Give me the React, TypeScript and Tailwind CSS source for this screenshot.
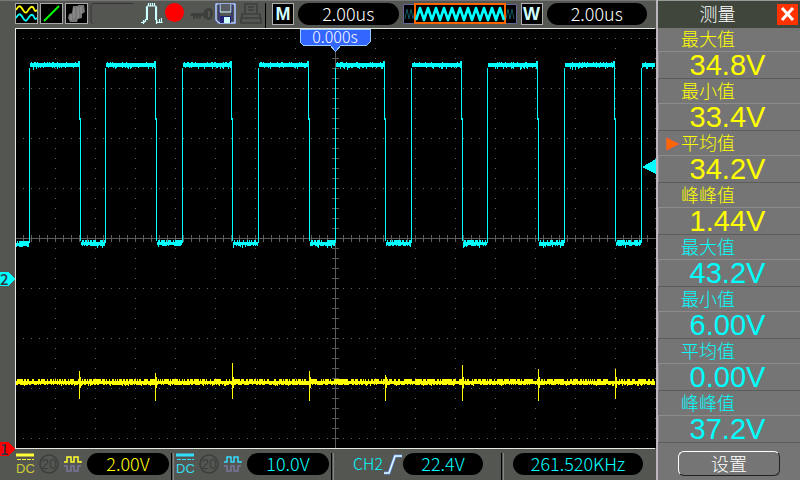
import type { ReactNode } from 'react';
import { clsx } from 'clsx';

interface Measurement {
  id: string;
  label: string;
  value: string;
  channel: 1 | 2;
  selected?: boolean;
}

const measurements: Measurement[] = [
  { id: 'ch1-max', label: '最大值', value: '34.8V', channel: 1 },
  { id: 'ch1-min', label: '最小值', value: '33.4V', channel: 1 },
  { id: 'ch1-avg', label: '平均值', value: '34.2V', channel: 1, selected: true },
  { id: 'ch1-pp', label: '峰峰值', value: '1.44V', channel: 1 },
  { id: 'ch2-max', label: '最大值', value: '43.2V', channel: 2 },
  { id: 'ch2-min', label: '最小值', value: '6.00V', channel: 2 },
  { id: 'ch2-avg', label: '平均值', value: '0.00V', channel: 2 },
  { id: 'ch2-pp', label: '峰峰值', value: '37.2V', channel: 2 },
];

const RISING = [29, 105, 182, 258, 335, 411, 487, 564, 641];
const FALLING = [80, 156, 232, 309, 385, 462, 538, 615];

// [x, top, bottom] of every glitch on channel 1
const SPIKES = [
  [79, 371, 399],
  [155, 373, 401],
  [232, 363, 399],
  [309, 371, 401],
  [385, 375, 401],
  [462, 365, 401],
  [538, 369, 401],
  [615, 369, 399],
];

function createNoise(seed: number) {
  let s = seed;
  return () => {
    s = (s * 1664525 + 1013904223) % 4294967296;
    return s / 4294967296;
  };
}

// One vertical bar per column: a solid core with a ragged edge on both sides
function noisyLine(from: number, to: number, y: number, seed: number, spread: number, rough = 0.4) {
  const noise = createNoise(seed);
  let d = '';
  for (let x = from; x < to; x++) {
    const up = noise() > rough ? 2 : 0;
    const down = noise() > rough ? 1 : 0;
    const extra = noise() > 0.88 ? spread : 0;
    d += `M${x} ${y - 1 - up}h1V${y + 2 + down + extra}h-1z`;
  }
  return d;
}

// The plateaus are flatter than the troughs, with an overshoot before each falling edge
function channelTwoPath() {
  let d = noisyLine(16, 29, 244, 7, 1);
  RISING.forEach((x, i) => {
    const end = FALLING[i] ?? 655;
    d += `M${x + 1} 63H${end}V67H${x + 1}z`;
    d += noisyLine(x + 1, end, 65, 31 + i, 2, 0.8);
    d += `M${x} 68h1V243h-1z`;
    if (FALLING[i]) {
      d += `M${end - 2} 61h2V67h-2zM${end - 1} 61h1V120h-1zM${end} 118h1V241h-1z`;
      d += noisyLine(end + 1, RISING[i + 1] ?? 655, 243, 77 + i, 2);
    }
  });
  return d;
}

function channelOnePath() {
  let d = noisyLine(16, 655, 382, 5, 1);
  SPIKES.forEach(([x, top, bottom]) => {
    d += `M${x} ${top}h1V${bottom}h-1zM${x + 1} 377h1V388h-1z`;
  });
  return d;
}

function gridDots() {
  let d = '';
  for (let y = 38; y < 448; y += 50) {
    if (y === 238) continue;
    for (let x = 23; x < 655; x += 8) d += `M${x} ${y}h1v1h-1z`;
  }
  for (let x = 55; x < 656; x += 40) {
    if (x === 335) continue;
    for (let y = 38; y < 448; y += 10) d += `M${x} ${y}h1v1h-1z`;
  }
  return d;
}

function axisTicks() {
  let d = 'M16 238h639v1H16zM335 46h1V448h-1z';
  for (let x = 23; x < 655; x += 8) d += `M${x} 235h1v7h-1z`;
  for (let y = 58; y < 448; y += 10) d += `M332 ${y}h7v1h-7z`;
  return d;
}

function zigzag(from: number, to: number, step: number, top: number, bottom: number) {
  let d = `M${from} ${bottom}`;
  for (let x = from + step, i = 0; x <= to; x += step, i++) d += `L${x} ${i % 2 ? bottom : top}`;
  return d;
}

function IconBox({ label, children }: { label: string; children: ReactNode }) {
  return (
    <button type="button" aria-label={label} className="h-[21px] w-[23px] shrink-0 border border-[#a8a8a8] bg-black">
      <svg viewBox="0 0 21 19" className="block h-full w-full">{children}</svg>
    </button>
  );
}

function Letter({ children }: { children: string }) {
  return (
    <span className="flex h-[22px] w-[22px] shrink-0 items-center justify-center border border-[#b0b0b0] bg-black font-['Liberation_Sans',sans-serif] text-lg leading-none font-bold text-[#d0ffff]">
      {children}
    </span>
  );
}

function Readout({ className, children }: { className?: string; children: string }) {
  return (
    <span className={clsx('flex h-[22px] items-center justify-center rounded-full bg-black pb-0.5 text-lg leading-none', className)}>
      {children}
    </span>
  );
}

function Divider() {
  return <span className="h-7 w-[3px] shrink-0 border-r border-l border-r-[#858585] border-l-black" />;
}

function CouplingIcon({ color, line }: { color: string; line: string }) {
  return (
    <svg viewBox="0 0 70 22" className="h-[22px] w-[70px] shrink-0 font-['Liberation_Sans',sans-serif] font-normal">
      <path d="M0 2h18" stroke={line} strokeWidth="3" />
      <path d="M1 6.5h17" stroke={line} strokeDasharray="4 1" />
      <text x="0" y="20" fontSize="13" fill={color}>DC</text>
      <circle cx="33" cy="11" r="9" fill="none" stroke="#3d3f3c" strokeWidth="1.5" />
      <text x="33" y="16" fontSize="14" textAnchor="middle" fill="#3d3f3c">20</text>
      <path d="M48 9h3V4h4v5h3V4h4v5h3V8" fill="none" stroke={line} strokeWidth="1.5" />
      <path d="M48 13h3v5h4v-5h3v5h4v-5h3" fill="none" stroke="#77779c" strokeWidth="1.5" />
    </svg>
  );
}

function Toolbar() {
  return (
    <header className="flex h-7 items-start border-t border-[#777] bg-[#545652] pt-0.5 pr-[9px] pl-[15px]">
      <div className="flex shrink-0 gap-0.5">
        <IconBox label="Channels">
          <path d="M0 6c3-5 4-5 7 0s4 2 6-1 4-3 5 0 2 2 3 1" fill="none" stroke="#ffff00" strokeWidth="1.8" />
          <path d="M0 14c3-5 4-5 7 0s4 2 6-1 4-3 5 0 2 2 3 1" fill="none" stroke="#00ffff" strokeWidth="1.8" />
        </IconBox>
        <IconBox label="Vectors">
          <path d="M3 17 18 2" stroke="#00ff00" strokeWidth="2" />
        </IconBox>
        <IconBox label="Persistence">
          <path d="M7 2h4l2-1h5l1 7-3 2v4l-4 1-1 3H4l-2-4 1-4 3-1z" fill="#777" />
          <path d="M8 4v10M12 3v11M15 3v6M5 11v5" stroke="#999" />
        </IconBox>
      </div>
      <svg viewBox="0 0 44 22" className="ml-0.5 h-[22px] w-11 shrink-0" fill="none">
        <path d="M43 .5H3L1 2v17l2 2" stroke="#3a323c" />
      </svg>
      <svg viewBox="0 0 22 22" className="ml-[7px] h-[22px] w-[22px] shrink-0" fill="none" stroke="#ccffff" strokeWidth="1.2">
        <path d="M0 19.5h3l2-3M5.5 17V4l1-1h8l1 1v13l1 2.5h5M2.5 17v4M4.5 16v3M7.5 0v3M9.5 0v3M11.5 0v3M13.5 0v3M15.5 15v6M18.5 16v4M20.5 15v4" />
        <path d="M6.5 4v13M14.5 4v13" strokeWidth="1" />
      </svg>
      <span className="ml-0.5 h-[19px] w-[19px] shrink-0 rounded-full bg-[#ff0000]" />
      <svg viewBox="0 0 24 22" className="ml-[5px] h-[22px] w-6 shrink-0" fill="#3d3f3c">
        <path d="M1 12l2-2h11c1-3 3-5 6-5s4 3 4 6-2 6-4 6-5-2-6-4h-2v2h-2v-2H9l1 3H8l-2-3v3H4v-3H2z" />
        <path d="M19 8h2v6h-2z" fill="#545652" />
      </svg>
      <button type="button" aria-label="Save" className="ml-0.5 h-[21px] w-[21px] shrink-0">
        <svg viewBox="0 0 21 21" className="block h-full w-full">
          <path d="M1 1h19v19H4l-3-3z" fill="#545652" stroke="#7777cc" strokeWidth="2" />
          <path d="M1 1h19v19H4l-3-3z" fill="none" stroke="#ccffff" strokeWidth="0.8" />
          <path d="M5 1v8h11V1" fill="#5a5c66" stroke="#ccffff" />
          <path d="M5 13h11v7H5z" fill="#222277" />
          <path d="M9 14h6v6H9z" fill="#ccffff" />
          <path d="M4 1v17M17 1v17" stroke="#222288" />
        </svg>
      </button>
      <svg viewBox="0 0 22 22" className="ml-1 h-[22px] w-[22px] shrink-0" fill="none" stroke="#3d3f3c" strokeWidth="1.6">
        <path d="M5 10V1h12v9M2 11h18v4H2zM1 15h20v5H1zM8 4h6M8 7h6" />
      </svg>
      <span className="mr-1.5 ml-[3px] h-[25px] w-px shrink-0 bg-black" />
      <div className="flex flex-1 gap-1 text-white">
        <Letter>M</Letter>
        <Readout className="flex-1">2.00us</Readout>
        <svg viewBox="0 0 114 22" className="h-[22px] w-[114px] shrink-0" fill="none">
          <path d="M.5 1.5h113v19H.5z" fill="#000" stroke="#66669a" />
          <path d={zigzag(2, 12, 2, 6, 16)} stroke="#0d5560" />
          <path d={zigzag(103, 112, 2, 6, 16)} stroke="#0d5560" />
          <path d="M12 1h90v19H12z" fill="#000" stroke="#ff6600" strokeWidth="2" />
          <path d={zigzag(13, 101, 4, 5, 17)} stroke="#00ffff" strokeWidth="2.6" strokeLinejoin="round" />
        </svg>
        <Letter>W</Letter>
        <Readout className="flex-1">2.00us</Readout>
      </div>
    </header>
  );
}

function ScopePlot() {
  return (
    <svg viewBox="0 28 656 421" className="relative z-10 block h-auto w-full overflow-visible" shapeRendering="crispEdges">
      <rect x="0" y="28" width="656" height="421" fill="#545652" />
      <rect x="16" y="29" width="640" height="419" fill="#000" />
      <path d="M655 28.5H15.5V448.5H655" fill="none" stroke="#e4e8e0" />
      <path d={gridDots()} fill="#666" />
      <path d={axisTicks()} fill="#5c5c5c" />
      <path d={channelTwoPath()} fill="#00ffff" />
      <path d={channelOnePath()} fill="#ffff00" />
      <path d="M656 159v15l-14-7z" fill="#00ffff" />
      <path d="M300 29h70v13l-3 3h-26l-5 6h-1l-5-6h-27l-3-3z" fill="#3366ff" stroke="#99ccff" />
      <text x="335" y="43" fontSize="16" textAnchor="middle" fill="#fff">0.000s</text>
      <path d="M0 272h9l6 7-6 7H0z" fill="#00ffff" />
      <text x="0" y="285" fontSize="15" fontWeight="500" fill="#334">2</text>
      <path d="M0 442h9l6 7-6 7H0z" fill="#ff0000" />
      <text x="0" y="455" fontSize="15" fontWeight="500" fill="#334">1</text>
    </svg>
  );
}

function StatusBar() {
  return (
    <footer className="flex flex-1 items-start bg-[#545652] pt-1">
      <div className="flex flex-[153] gap-px pr-0.5 pl-4 text-[#ffff00]">
        <CouplingIcon color="#cccc33" line="#ffff33" />
        <Readout className="flex-1">2.00V</Readout>
      </div>
      <Divider />
      <div className="flex flex-[153] gap-px pr-0.5 pl-0.5 text-[#00ffff]">
        <CouplingIcon color="#33ddee" line="#33ddff" />
        <Readout className="flex-1">10.0V</Readout>
      </div>
      <Divider />
      <div className="flex flex-[130] items-center pr-[18px] pl-[19px] text-base text-[#00ffff]">
        <span className="pb-0.5 leading-none">CH2</span>
        <svg viewBox="0 0 20 22" className="h-[22px] w-5 shrink-0" fill="none">
          <path d="M1 20h5l6-17h7" stroke="#6688dd" strokeWidth="3" />
          <path d="M1 20h5l6-17h7" stroke="#ddffff" strokeWidth="1.5" />
        </svg>
        <Readout className="flex-1">22.4V</Readout>
      </div>
      <Divider />
      <div className="flex flex-[130] pr-[13px] pl-[9px] text-[#00ffff]">
        <Readout className="flex-1">261.520KHz</Readout>
      </div>
    </footer>
  );
}

function MeasurePanel() {
  return (
    <aside className="flex w-36 shrink-0 flex-col border-l-2 border-[#bdb5bd] bg-[#757575]">
      <div className="flex h-7 items-center border-t border-[#999] bg-[#40463c] pr-0.5 text-white">
        <h1 className="flex-1 pb-1 text-center text-lg leading-none">测量</h1>
        <button type="button" aria-label="关闭" className="h-[21px] w-[21px] bg-[#ff3300]">
          <svg viewBox="0 0 21 21" className="block h-full w-full">
            <path d="M5 4l11 12M16 4L5 16" stroke="#fff" strokeWidth="3" />
          </svg>
        </button>
      </div>
      <dl className="font-['Liberation_Sans','Noto_Sans_CJK_SC',sans-serif]">
        {measurements.map((m) => (
          <div key={m.id} className={clsx('mb-px', m.channel === 1 ? 'text-[#ffff00]' : 'text-[#00ffff]')}>
            <dt className="flex h-[23px] items-center pl-2 text-lg leading-none">
              <svg viewBox="0 0 15 16" className="h-4 w-[15px] shrink-0">
                {m.selected && <path d="M0 1v14l14-7z" fill="#ff6600" stroke="#996677" />}
              </svg>
              {m.label}
            </dt>
            <dd className="flex h-7 items-center justify-center border-t border-b border-l border-t-[#8c8c8c] border-b-[#5c5c5c] border-l-[#8c8c8c] pr-1 text-[29px] leading-none">
              {m.value}
            </dd>
          </div>
        ))}
      </dl>
      <button
        type="button"
        className="mx-5 mt-[7px] h-[25px] rounded-md border border-t-white border-r-[#222] border-b-[#222] border-l-white pb-0.5 text-lg leading-none text-white"
      >
        设置
      </button>
    </aside>
  );
}

export default function App() {
  return (
    <main className="flex min-h-screen bg-[#545652] font-['Noto_Sans_CJK_SC',sans-serif] font-light">
      <div className="flex min-w-0 flex-1 flex-col">
        <Toolbar />
        <ScopePlot />
        <StatusBar />
      </div>
      <MeasurePanel />
    </main>
  );
}
